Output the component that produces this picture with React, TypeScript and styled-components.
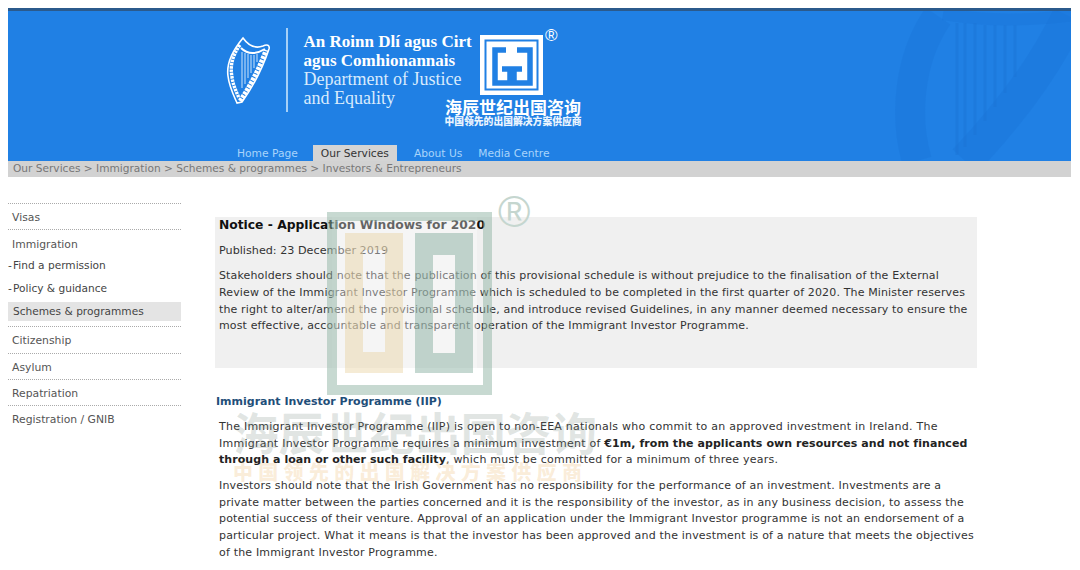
import React from 'react'
import styled, { createGlobalStyle } from 'styled-components'

const GlobalStyle = createGlobalStyle`
	html, body {
		margin: 0;
		height: 570px;
		overflow: hidden;
		background: #fff;
	}
	body {
		padding: 8px 9px 0 8px;
		box-sizing: border-box;
		font-family: "DejaVu Sans", Verdana, sans-serif;
		font-size: 11px;
		color: #333;
	}
`

const Page = styled.div`
	position: relative;
	width: 1063px;
`

const Header = styled.header`
	position: relative;
	height: 153px;
	box-sizing: border-box;
	border-top: 3px solid #2b5a8c;
	background: #2080e4;
	display: flex;
	flex-direction: column;
	overflow: hidden;
`

const Brand = styled.div`
	display: flex;
	align-items: flex-start;
	height: 131px;
	padding: 17px 0 0 217px;
	box-sizing: border-box;
`

const Crest = styled.svg`
	width: 46px;
	height: 70px;
	margin-top: 8px;
	flex: none;
`

const BrandRule = styled.div`
	width: 1.5px;
	height: 84px;
	margin-left: 15px;
	background: #a6d0f7;
	flex: none;
`

const BrandName = styled.div`
	margin: 4px 0 0 16px;
	font-family: "Liberation Serif", serif;
	line-height: 19px;
`

const BrandLine = styled.div<{ $strong?: boolean }>`
	font-size: ${p => (p.$strong ? '17px' : '18px')};
	font-weight: ${p => (p.$strong ? 700 : 400)};
	color: ${p => (p.$strong ? '#fff' : '#d8ebfd')};
`

const GhostHarp = styled.svg`
	position: absolute;
	right: -12px;
	top: 0;
	width: 190px;
	height: 150px;
`

const PartnerLogo = styled.div`
	position: absolute;
	left: 435px;
	top: 18px;
	width: 140px;
	display: flex;
	flex-direction: column;
	align-items: center;
`

const PartnerMark = styled.svg`
	width: 140px;
	height: 72px;
`

const Registered = styled.span`
	position: absolute;
	left: 102px;
	top: -3px;
	font-family: "Liberation Sans", sans-serif;
	font-size: 17px;
	line-height: 20px;
	color: #fff;
`

const PartnerName = styled.div`
	margin-top: -3px;
	font-family: "Noto Sans CJK SC", sans-serif;
	font-size: 17px;
	line-height: 17px;
	font-weight: 700;
	color: #fff;
	white-space: nowrap;
`

const PartnerSlogan = styled.div`
	margin-top: 1px;
	font-family: "Noto Sans CJK SC", sans-serif;
	font-size: 9.8px;
	line-height: 10px;
	font-weight: 900;
	color: #eaf4fe;
	white-space: nowrap;
`

const Tabs = styled.nav`
	display: flex;
	align-items: flex-end;
	height: 19px;
	padding-left: 221px;
`

const Tab = styled.a<{ $active?: boolean }>`
	height: 16px;
	line-height: 17px;
	padding: 0 8px;
	margin: ${p => (p.$active ? '0 9px 0 7px' : '0')};
	background: ${p => (p.$active ? '#d4d4d4' : 'transparent')};
	color: ${p => (p.$active ? '#333' : '#a8d4fb')};
	font-size: 10.7px;
	white-space: nowrap;
`

const Breadcrumb = styled.div`
	height: 16px;
	line-height: 15px;
	padding-left: 5px;
	background: #d2d2d2;
	color: #777;
	font-size: 10.6px;
	white-space: nowrap;
`

const Body = styled.div`
	display: grid;
	grid-template-columns: 173px 762px;
	column-gap: 34px;
	padding-top: 26px;
`

const Sidebar = styled.aside`
	border-top: 1px dotted #aaa;
	font-size: 10.8px;
`

const SideItem = styled.div`
	height: 25.33px;
	line-height: 27.4px;
	padding-left: 4px;
	border-bottom: 1px dotted #aaa;
	color: #555;
	&:last-child {
		border-bottom: none;
	}
`

const SideGroup = styled.div`
	border-bottom: 1px dotted #aaa;
	padding: 5px 0;
`

const GroupTitle = styled.div`
	height: 17px;
	line-height: 19px;
	padding-left: 4px;
	color: #555;
`

const SubItem = styled.div<{ $active?: boolean }>`
	height: 19px;
	line-height: 19px;
	margin-top: 4px;
	padding-left: 5px;
	background: ${p => (p.$active ? '#e4e4e4' : 'transparent')};
	color: #444;
	font-size: 10.6px;
	position: relative;
	&:first-of-type {
		margin-top: 3.5px;
	}
`

const Dash = styled.span`
	position: absolute;
	left: 0;
	top: 0;
`

const Main = styled.main`
	padding-top: 14px;
`

const NoticeBox = styled.section`
	height: 151px;
	box-sizing: border-box;
	background: #f0f0f0;
	padding: 0 6px 0 4px;
`

const NoticeTitle = styled.h2`
	margin: 0;
	font-size: 12.3px;
	line-height: 16px;
	font-weight: 700;
	color: #111;
`

const Published = styled.p`
	margin: 8.5px 0 0;
	font-size: 11.2px;
	line-height: 17px;
`

const Paragraph = styled.p<{ $track: number }>`
	margin: 9.5px 0 0;
	line-height: 16.8px;
	letter-spacing: ${p => p.$track}px;
	color: #333;
	strong {
		letter-spacing: 0.07px;
		color: #222;
	}
`

const SectionTitle = styled.h3`
	margin: 24.5px 0 0;
	padding-left: 1px;
	font-size: 11px;
	line-height: 17px;
	font-weight: 700;
	color: #1f4e79;
`

const SectionBody = styled.div`
	padding: 0 0 0 4px;
	p:first-child {
		margin-top: 9.4px;
	}
	p + p {
		margin-top: 8.6px;
	}
`

const Watermark = styled.div`
	position: absolute;
	left: 225px;
	top: 187px;
	width: 370px;
	display: flex;
	flex-direction: column;
	align-items: flex-start;
	pointer-events: none;
`

const WatermarkMark = styled.svg`
	width: 220px;
	height: 205px;
	margin-left: 87px;
`

const WatermarkRegistered = styled.span`
	position: absolute;
	left: 265px;
	top: -8px;
	font-family: "Liberation Sans", sans-serif;
	font-size: 44px;
	line-height: 50px;
	color: #c5d6cf;
`

const WatermarkName = styled.div`
	margin-top: 8px;
	font-family: "Noto Sans CJK SC", sans-serif;
	font-size: 45.5px;
	line-height: 46px;
	font-weight: 700;
	color: rgba(120, 140, 130, 0.22);
	white-space: nowrap;
`

const WatermarkSlogan = styled.div`
	margin-top: 5px;
	font-family: "Noto Sans CJK SC", sans-serif;
	font-size: 20px;
	line-height: 26px;
	letter-spacing: 5.3px;
	font-weight: 900;
	color: rgba(238, 185, 110, 0.26);
	white-space: nowrap;
`

const App = () => (
	<>
		<GlobalStyle />
		<Page>
			<Header>
				<GhostHarp viewBox="0 0 190 150" aria-hidden="true">
					<path d="M24 150 C12 110 14 50 45 5" fill="none" stroke="#1b74d6" strokeWidth="30" opacity="0.35" />
					<path d="M72 150 C110 110 150 60 176 5" fill="none" stroke="#1b74d6" strokeWidth="34" opacity="0.35" />
					<path d="M50 3 C90 10 140 10 190 3" fill="none" stroke="#1b74d6" strokeWidth="12" opacity="0.35" />
					<path d="M64 12V144M72 12V136M82 12V124M92 14V110M102 14V96M112 14V82M122 14V66" stroke="#1b74d6" strokeWidth="3" opacity="0.45" />
				</GhostHarp>
				<Brand>
					<Crest viewBox="0 0 46 70" aria-hidden="true">
						<path d="M18 2 C8 14 1 26 3 40 C4 50 8 58 12 67 L17 66 C27 52 37 34 44 13 C45 9 42 8 38 10 C30 13 23 9 18 2 Z" fill="none" stroke="#fff" strokeWidth="1.6" />
						<path d="M15 9 C7 20 5 30 7 41 C8 49 11 55 14 62" fill="none" stroke="#fff" strokeWidth="3.4" strokeDasharray="2.5 0.8" />
						<path d="M15 65 C25 50 34 33 41 14" fill="none" stroke="#fff" strokeWidth="4.5" strokeDasharray="3 1" />
						<path d="M16 12 C22 18 30 19 40 13" fill="none" stroke="#fff" strokeWidth="2" />
						<path d="M17 16V52M20 17V48M23 18V42M26 19V37M29 19V32M32 18V26" stroke="#e3f0fd" strokeWidth="0.9" />
					</Crest>
					<BrandRule />
					<BrandName>
						<BrandLine $strong>An Roinn Dlí agus Cirt</BrandLine>
						<BrandLine $strong>agus Comhionannais</BrandLine>
						<BrandLine>Department of Justice</BrandLine>
						<BrandLine>and Equality</BrandLine>
					</BrandName>
				</Brand>
				<PartnerLogo>
					<PartnerMark viewBox="0 0 140 72" aria-hidden="true">
						<rect x="37" y="6" width="63" height="60" fill="#fff" />
						<rect x="41.5" y="10.5" width="54" height="51" fill="#2080e4" />
						<rect x="43.5" y="12.5" width="50" height="47" fill="#fff" />
						<path d="M63 21H52V54H67V40H59M74 21H87V54H71V40H79" fill="none" stroke="#2080e4" strokeWidth="5.5" />
					</PartnerMark>
					<Registered>®</Registered>
					<PartnerName>海辰世纪出国咨询</PartnerName>
					<PartnerSlogan>中国领先的出国解决方案供应商</PartnerSlogan>
				</PartnerLogo>
				<Tabs>
					<Tab>Home Page</Tab>
					<Tab $active>Our Services</Tab>
					<Tab>About Us</Tab>
					<Tab>Media Centre</Tab>
				</Tabs>
			</Header>
			<Breadcrumb>Our Services &gt; Immigration &gt; Schemes &amp; programmes &gt; Investors &amp; Entrepreneurs</Breadcrumb>
			<Body>
				<Sidebar>
					<SideItem>Visas</SideItem>
					<SideGroup>
						<GroupTitle>Immigration</GroupTitle>
						<SubItem><Dash>-</Dash>Find a permission</SubItem>
						<SubItem><Dash>-</Dash>Policy &amp; guidance</SubItem>
						<SubItem $active>Schemes &amp; programmes</SubItem>
					</SideGroup>
					<SideItem>Citizenship</SideItem>
					<SideItem>Asylum</SideItem>
					<SideItem>Repatriation</SideItem>
					<SideItem>Registration / GNIB</SideItem>
				</Sidebar>
				<Main>
					<NoticeBox>
						<NoticeTitle>Notice - Application Windows for 2020</NoticeTitle>
						<Published>Published: 23 December 2019</Published>
						<Paragraph $track={0.14}>
							Stakeholders should note that the publication of this provisional schedule is without prejudice to the finalisation of the External Review of the Immigrant Investor Programme which is scheduled to be completed in the first quarter of 2020. The Minister reserves the right to alter/amend the provisional schedule, and introduce revised Guidelines, in any manner deemed necessary to ensure the most effective, accountable and transparent operation of the Immigrant Investor Programme.
						</Paragraph>
					</NoticeBox>
					<SectionTitle>Immigrant Investor Programme (IIP)</SectionTitle>
					<SectionBody>
						<Paragraph $track={0.24}>
							The Immigrant Investor Programme (IIP) is open to non-EEA nationals who commit to an approved investment in Ireland. The Immigrant Investor Programme requires a minimum investment of <strong>€1m, from the applicants own resources and not financed through a loan or other such facility</strong>, which must be committed for a minimum of three years.
						</Paragraph>
						<Paragraph $track={0.18}>
							Investors should note that the Irish Government has no responsibility for the performance of an investment. Investments are a private matter between the parties concerned and it is the responsibility of the investor, as in any business decision, to assess the potential success of their venture. Approval of an application under the Immigrant Investor programme is not an endorsement of a particular project. What it means is that the investor has been approved and the investment is of a nature that meets the objectives of the Immigrant Investor Programme.
						</Paragraph>
					</SectionBody>
				</Main>
			</Body>
			<Watermark aria-hidden="true">
				<WatermarkMark viewBox="0 0 220 205">
					<rect x="12" y="22" width="145" height="163" fill="#fff" opacity="0.35" />
					<path fillRule="evenodd" d="M7 17H172V200H7ZM17 26V190H163V26Z" fill="#8fb3a4" opacity="0.5" />
					<path fillRule="evenodd" d="M25 38H83V178H25ZM43 55V157H65V55Z" fill="#e8cf9c" opacity="0.42" />
					<path fillRule="evenodd" d="M95 38H153V178H95ZM113 60V158H135V60Z" fill="#7fa899" opacity="0.45" />
				</WatermarkMark>
				<WatermarkRegistered>®</WatermarkRegistered>
				<WatermarkName>海辰世纪出国咨询</WatermarkName>
				<WatermarkSlogan>中国领先的出国解决方案供应商</WatermarkSlogan>
			</Watermark>
		</Page>
	</>
)

export default App
